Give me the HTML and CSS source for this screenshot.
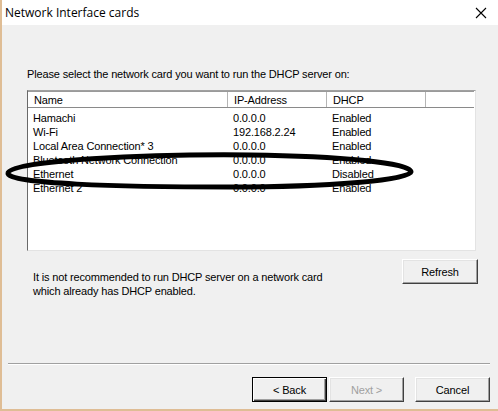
FILE: index.html
```html
<!DOCTYPE html>
<html>
<head>
<meta charset="utf-8">
<link rel="stylesheet" href="styles.css">
</head>
<body>
<div class="window">
  <div class="titlebar">
    <span class="title">Network Interface cards</span>
    <svg class="close" width="12" height="12" viewBox="0 0 12 12"><path d="M1 1 L11 11 M11 1 L1 11" stroke="#000" stroke-width="1.1" fill="none"/></svg>
  </div>
  <div class="content">
    <div class="prompt">Please select the network card you want to run the DHCP server on:</div>
    <div class="listwrap">
      <div class="list">
        <div class="row header">
          <div class="cell c1">Name</div>
          <div class="cell c2">IP-Address</div>
          <div class="cell c3">DHCP</div>
          <div class="cell c4"></div>
        </div>
        <div class="rows">
          <div class="row"><div class="cell c1">Hamachi</div><div class="cell c2">0.0.0.0</div><div class="cell c3">Enabled</div></div>
          <div class="row"><div class="cell c1">Wi-Fi</div><div class="cell c2">192.168.2.24</div><div class="cell c3">Enabled</div></div>
          <div class="row"><div class="cell c1">Local Area Connection* 3</div><div class="cell c2">0.0.0.0</div><div class="cell c3">Enabled</div></div>
          <div class="row"><div class="cell c1">Bluetooth Network Connection</div><div class="cell c2">0.0.0.0</div><div class="cell c3">Enabled</div></div>
          <div class="row"><div class="cell c1">Ethernet</div><div class="cell c2">0.0.0.0</div><div class="cell c3">Disabled</div></div>
          <div class="row"><div class="cell c1">Ethernet 2</div><div class="cell c2">0.0.0.0</div><div class="cell c3">Enabled</div></div>
        </div>
      </div>
      <svg class="circle" width="420" height="50" viewBox="0 0 420 50"><path d="M8 27 C 10 14, 150 8, 250 9 C 340 10, 412 17, 411 26 C 410 34, 330 41, 230 41 C 120 41, 6 38, 8 27 Z" fill="none" stroke="#000" stroke-width="5"/></svg>
    </div>
    <div class="info">
      <p class="note">It is not recommended to run DHCP server on a network card<br>which already has DHCP enabled.</p>
      <button class="btn refresh">Refresh</button>
    </div>
  </div>
  <div class="footer">
    <div class="sep"></div>
    <div class="buttons">
      <button class="btn default">&lt; Back</button>
      <button class="btn" disabled>Next &gt;</button>
      <button class="btn cancel">Cancel</button>
    </div>
  </div>
</div>
</body>
</html>
```
FILE: styles.css
```css
* { box-sizing: border-box; }
html, body { margin: 0; padding: 0; }
body {
  width: 498px;
  height: 411px;
  overflow: hidden;
  font-family: "Liberation Sans", Arial, sans-serif;
  font-size: 11px;
  letter-spacing: -0.15px;
  color: #000;
  background: #f0f0f0;
}
.window {
  width: 498px;
  height: 411px;
  display: flex;
  flex-direction: column;
  border-left: 2px solid #dfbd95;
  border-bottom: 2px solid #dfbd95;
  background: #f0f0f0;
}
.titlebar {
  height: 25px;
  background: #fff;
  display: flex;
  align-items: center;
  justify-content: space-between;
  padding: 0 11px 0 3px;
}
.title {
  font-family: "Open Sans", "Liberation Sans", sans-serif;
  font-size: 12px;
  letter-spacing: 0;
}
.close { display: block; }
.content {
  padding: 42px 0 0 25px;
}
.prompt {
  height: 15px;
  line-height: 15px;
}
.listwrap {
  position: relative;
  margin-top: 8px;
  width: 449px;
  height: 161px;
}
.list {
  width: 449px;
  height: 161px;
  background: #fff;
  border-top: 1px solid #a0a0a0;
  border-left: 1px solid #696969;
  border-right: 1px solid #e3e3e3;
  border-bottom: 1px solid #e3e3e3;
}
.row {
  display: flex;
  height: 14px;
  line-height: 14px;
}
.header {
  height: 17px;
  line-height: 16px;
  border-top: 1px solid #9a9a9a;
  border-bottom: 1px solid #8a8a8a;
  margin-right: 1px;
}
.header .cell { border-right: 1px solid #b5b5b5; padding-left: 6px; }
.header .c4 { border-right: none; flex: 1; }
.rows { padding-top: 3px; }
.cell { white-space: nowrap; overflow: hidden; padding-left: 5px; }
.c1 { width: 200px; }
.c2 { width: 99px; }
.c3 { width: 99px; }
.circle {
  position: absolute;
  left: -27px;
  top: 56px;
}
.info {
  display: flex;
  justify-content: space-between;
  align-items: flex-start;
  width: 451px;
  margin-top: 8px;
}
.note {
  margin: 11px 0 0 6px;
  line-height: 14px;
}
.btn {
  font-family: "Liberation Sans", Arial, sans-serif;
  font-size: 11px;
  letter-spacing: -0.15px;
  color: #000;
  background: #f0f0f0;
  border: 1px solid;
  border-color: #fff #404040 #404040 #fff;
  box-shadow: inset -1px -1px 0 #a0a0a0, inset 1px 1px 0 #e3e3e3;
  width: 75px;
  height: 25px;
  padding: 0;
}
.refresh { width: 76px; }
.footer {
  margin-top: auto;
  padding: 0 8px 7px 6px;
}
.sep {
  height: 2px;
  border-top: 1px solid #a0a0a0;
  border-bottom: 1px solid #fff;
}
.buttons {
  display: flex;
  justify-content: flex-end;
  gap: 2px;
  margin-top: 12px;
}
.btn.default {
  border: 1px solid #000;
  box-shadow: inset 1px 1px 0 #fff, inset -1px -1px 0 #404040, inset -2px -2px 0 #a0a0a0;
}
.btn:disabled { color: #a0a0a0; }
.btn.cancel { margin-left: 9px; }
```
